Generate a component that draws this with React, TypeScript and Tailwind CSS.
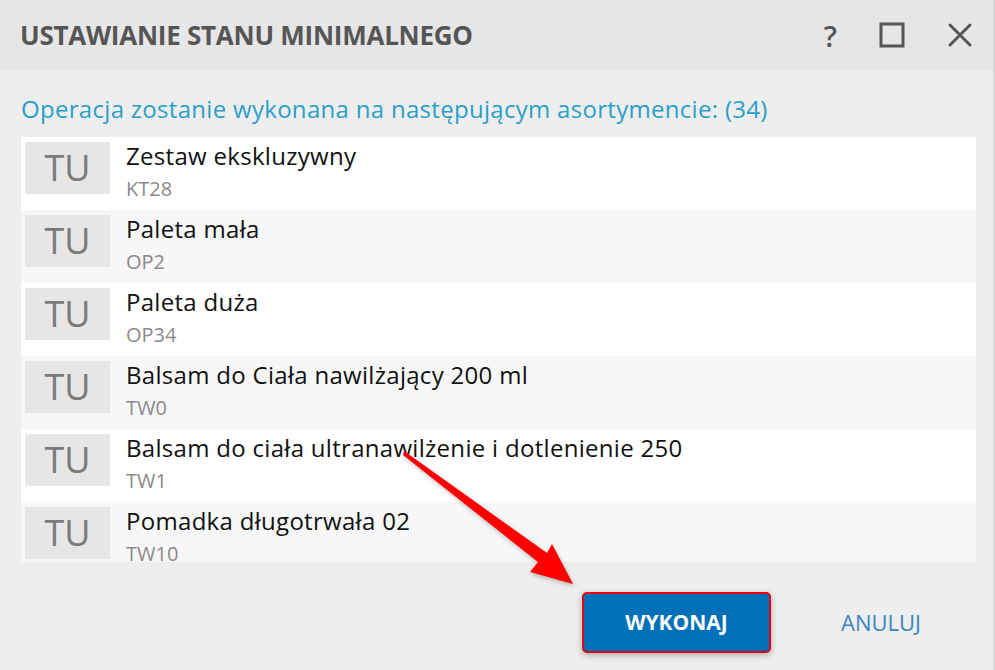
import React from "react";

const items = [
  { name: "Zestaw ekskluzywny", code: "KT28" },
  { name: "Paleta mała", code: "OP2" },
  { name: "Paleta duża", code: "OP34" },
  { name: "Balsam do Ciała nawilżający 200 ml", code: "TW0" },
  { name: "Balsam do ciała ultranawilżenie i dotlenienie 250", code: "TW1" },
  { name: "Pomadka długotrwała 02", code: "TW10" },
];

function ItemRow({ name, code, odd }: { name: string; code: string; odd: boolean }) {
  return (
    <div className={`flex h-[73px] shrink-0 ${odd ? "bg-[#f7f7f7]" : "bg-white"}`}>
      <div className="ml-[4px] mt-[5px] flex h-[52px] w-[85px] items-center justify-center bg-[#e6e6e6] text-[36px] font-medium text-[#7a7a7a]">
        TU
      </div>
      <div className="ml-[16px] pt-[4px]">
        <div className="text-[24px] leading-[30px] tracking-[0.3px] text-[#111]">{name}</div>
        <div className="mt-[4px] text-[20px] leading-[28px] text-[#8a8a8a]">{code}</div>
      </div>
    </div>
  );
}

export default function App() {
  return (
    <div
      className="relative flex h-[670px] w-[995px] flex-col overflow-hidden border-r-2 border-[#d6d6d6] bg-[#eeeeee]"
      style={{ fontFamily: '"Open Sans", "Noto Sans", sans-serif' }}
    >
      <div className="flex h-[70px] shrink-0 items-center justify-between bg-[#e6e6e6] pl-[20px] pr-[20px]">
        <h1 className="text-[26px] font-bold tracking-[-0.25px] text-[#555]">USTAWIANIE STANU MINIMALNEGO</h1>
        <div className="flex items-center text-[#555]">
          <span className="mr-[42px] text-[29px] font-semibold leading-none">?</span>
          <svg width="26" height="26" viewBox="0 0 26 26" className="mr-[42px]">
            <rect x="2" y="2" width="22" height="22" fill="none" stroke="#555" strokeWidth="3" />
          </svg>
          <svg width="26" height="26" viewBox="0 0 26 26">
            <path d="M3 3 L23 23 M23 3 L3 23" stroke="#555" strokeWidth="3" strokeLinecap="round" />
          </svg>
        </div>
      </div>

      <div className="flex flex-1 flex-col pl-[21px] pr-[17px]">
        <div className="h-[67px] shrink-0 pt-[24px] text-[24px] leading-[30px] tracking-[0.3px] text-[#2b9fc9]">
          Operacja zostanie wykonana na następującym asortymencie: (34)
        </div>
        <div className="flex h-[425px] shrink-0 flex-col overflow-hidden">
          {items.map((it, i) => (
            <ItemRow key={it.code} name={it.name} code={it.code} odd={i % 2 === 1} />
          ))}
        </div>
        <div className="mt-[30px] flex items-center">
          <button className="ml-[561px] flex h-[61px] w-[189px] items-center justify-center rounded-[5px] border-2 border-[#e8000f] bg-[#0070b8] text-[21px] font-bold text-white shadow-[0_2px_6px_rgba(0,0,0,0.3)]">
            WYKONAJ
          </button>
          <button className="ml-[70px] text-[22px] text-[#3a86bf]">ANULUJ</button>
        </div>
      </div>

      <svg className="pointer-events-none absolute left-0 top-0" width="995" height="670">
        <polygon
          points="404,451 547,553 552,544 573,584 530,572 538,562 403,455"
          fill="#ff0000"
          style={{ filter: "drop-shadow(1px 2px 2px rgba(0,0,0,0.25))" }}
        />
      </svg>
    </div>
  );
}
